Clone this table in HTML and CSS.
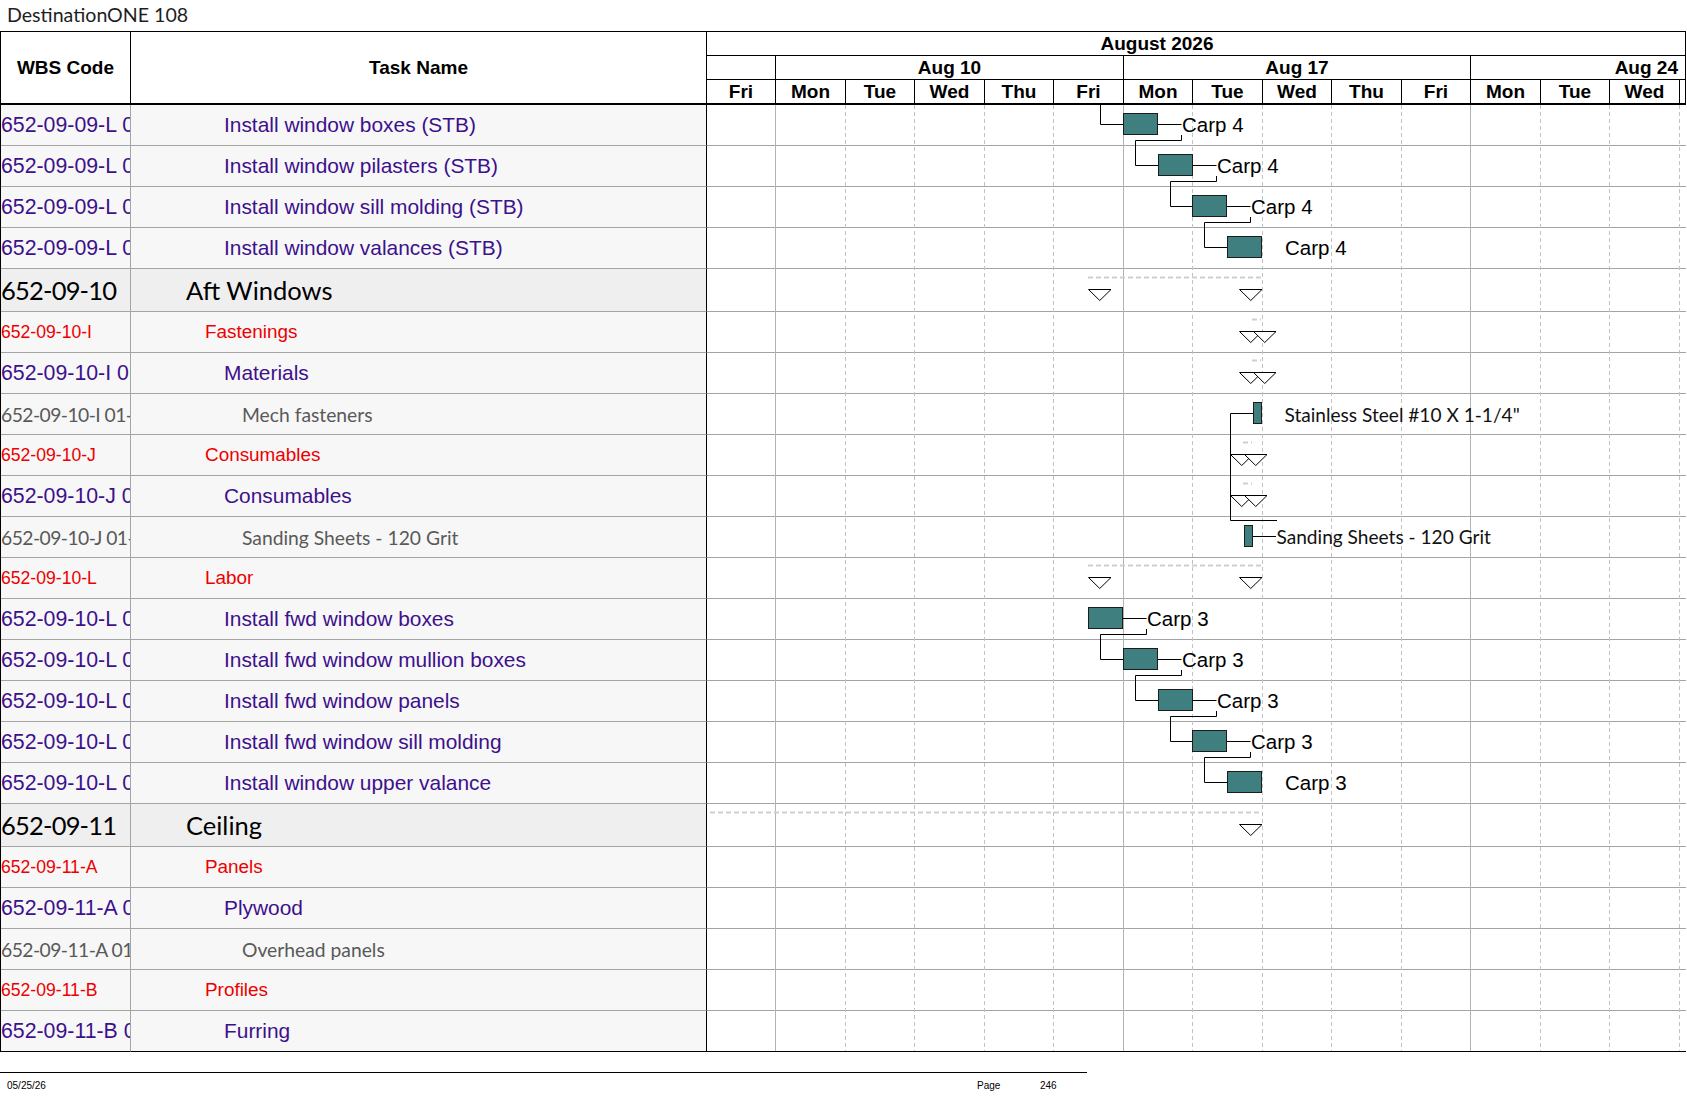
FILE: index.html
```html
<!DOCTYPE html>
<html lang="en">
<head>
<meta charset="utf-8">
<title>DestinationONE 108</title>
<link rel="stylesheet" href="styles.css">
</head>
<body>
<div class="page">
  <div class="doc-title">DestinationONE 108</div>
  <div class="sheet">
    <div class="sheet-head">
      <div class="hcell wbs-h">WBS Code</div>
      <div class="hcell task-h">Task Name</div>
      <div class="time-h">
        <div class="trow month"><span>August 2026</span></div>
        <div class="trow weeks">
          <div class="tc w0"></div>
          <div class="tc w1">Aug 10</div>
          <div class="tc w2">Aug 17</div>
          <div class="tc w3">Aug 24</div>
        </div>
        <div class="trow days">
          <div class="tc c69">Fri</div>
          <div class="tc c70">Mon</div>
          <div class="tc c69">Tue</div>
          <div class="tc c70">Wed</div>
          <div class="tc c69">Thu</div>
          <div class="tc c70">Fri</div>
          <div class="tc c69">Mon</div>
          <div class="tc c70">Tue</div>
          <div class="tc c69">Wed</div>
          <div class="tc c70">Thu</div>
          <div class="tc c69">Fri</div>
          <div class="tc c70">Mon</div>
          <div class="tc c69">Tue</div>
          <div class="tc c70">Wed</div>
          <div class="tc dend"></div>
        </div>
      </div>
    </div>

    <div class="sheet-body">
      <div class="row item"><div class="wbs">652-09-09-L 01-01</div><div class="task">Install window boxes (STB)</div><div class="gcell"></div></div>
      <div class="row item"><div class="wbs">652-09-09-L 01-02</div><div class="task">Install window pilasters (STB)</div><div class="gcell"></div></div>
      <div class="row item"><div class="wbs">652-09-09-L 01-03</div><div class="task">Install window sill molding (STB)</div><div class="gcell"></div></div>
      <div class="row item"><div class="wbs">652-09-09-L 01-04</div><div class="task">Install window valances (STB)</div><div class="gcell"></div></div>
      <div class="row sum"><div class="wbs">652-09-10</div><div class="task">Aft Windows</div><div class="gcell"></div></div>
      <div class="row grp"><div class="wbs">652-09-10-I</div><div class="task">Fastenings</div><div class="gcell"></div></div>
      <div class="row item"><div class="wbs">652-09-10-I 01</div><div class="task">Materials</div><div class="gcell"></div></div>
      <div class="row res"><div class="wbs">652-09-10-I 01-01</div><div class="task">Mech fasteners</div><div class="gcell"></div></div>
      <div class="row grp"><div class="wbs">652-09-10-J</div><div class="task">Consumables</div><div class="gcell"></div></div>
      <div class="row item"><div class="wbs">652-09-10-J 01</div><div class="task">Consumables</div><div class="gcell"></div></div>
      <div class="row res"><div class="wbs">652-09-10-J 01-01</div><div class="task">Sanding Sheets - 120 Grit</div><div class="gcell"></div></div>
      <div class="row grp"><div class="wbs">652-09-10-L</div><div class="task">Labor</div><div class="gcell"></div></div>
      <div class="row item"><div class="wbs">652-09-10-L 01-01</div><div class="task">Install fwd window boxes</div><div class="gcell"></div></div>
      <div class="row item"><div class="wbs">652-09-10-L 01-02</div><div class="task">Install fwd window mullion boxes</div><div class="gcell"></div></div>
      <div class="row item"><div class="wbs">652-09-10-L 01-03</div><div class="task">Install fwd window panels</div><div class="gcell"></div></div>
      <div class="row item"><div class="wbs">652-09-10-L 01-04</div><div class="task">Install fwd window sill molding</div><div class="gcell"></div></div>
      <div class="row item"><div class="wbs">652-09-10-L 01-05</div><div class="task">Install window upper valance</div><div class="gcell"></div></div>
      <div class="row sum"><div class="wbs">652-09-11</div><div class="task">Ceiling</div><div class="gcell"></div></div>
      <div class="row grp"><div class="wbs">652-09-11-A</div><div class="task">Panels</div><div class="gcell"></div></div>
      <div class="row item"><div class="wbs">652-09-11-A 01</div><div class="task">Plywood</div><div class="gcell"></div></div>
      <div class="row res"><div class="wbs">652-09-11-A 01-01</div><div class="task">Overhead panels</div><div class="gcell"></div></div>
      <div class="row grp"><div class="wbs">652-09-11-B</div><div class="task">Profiles</div><div class="gcell"></div></div>
      <div class="row item last"><div class="wbs">652-09-11-B 01</div><div class="task">Furring</div><div class="gcell"></div></div>

      <svg class="gantt-art" width="978" height="947" viewBox="0 0 978 947" xmlns="http://www.w3.org/2000/svg">
        <g class="grid-solid">
          <line x1="68.5" y1="0" x2="68.5" y2="946"/>
          <line x1="416.5" y1="0" x2="416.5" y2="946"/>
          <line x1="763.5" y1="0" x2="763.5" y2="946"/>
        </g>
        <g class="grid-dash">
          <line x1="138.5" y1="0" x2="138.5" y2="946"/>
          <line x1="207.5" y1="0" x2="207.5" y2="946"/>
          <line x1="277.5" y1="0" x2="277.5" y2="946"/>
          <line x1="346.5" y1="0" x2="346.5" y2="946"/>
          <line x1="485.5" y1="0" x2="485.5" y2="946"/>
          <line x1="555.5" y1="0" x2="555.5" y2="946"/>
          <line x1="624.5" y1="0" x2="624.5" y2="946"/>
          <line x1="694.5" y1="0" x2="694.5" y2="946"/>
          <line x1="833.5" y1="0" x2="833.5" y2="946"/>
          <line x1="902.5" y1="0" x2="902.5" y2="946"/>
          <line x1="972.5" y1="0" x2="972.5" y2="946"/>
        </g>

        <g class="sum-dash">
          <path d="M381 172.5 H555"/>
          <path d="M545 214.5 H554"/>
          <path d="M545 255.5 H554"/>
          <path d="M536 337.5 H545"/>
          <path d="M536 378.5 H545"/>
          <path d="M381 460.5 H555"/>
          <path d="M3 707.5 H555"/>
        </g>

        <g class="link">
          <path d="M393.5 0 V19.5 H416"/>
          <path d="M451 19.5 H474.5"/>
          <path d="M474.5 30 V35.5 H428.5 V60.5 H451"/>
          <path d="M486 60.5 H509.5"/>
          <path d="M509.5 71 V76.5 H463.5 V101.5 H485"/>
          <path d="M520 101.5 H543.5"/>
          <path d="M543.5 112 V117.5 H497.5 V142.5 H520"/>

          <path d="M546 308.5 H523.5 V415.5 H570"/>
          <path d="M546 431.5 H569"/>

          <path d="M416 513.5 H439.5"/>
          <path d="M439.5 524 V529.5 H393.5 V554.5 H416"/>
          <path d="M451 554.5 H474.5"/>
          <path d="M474.5 565 V570.5 H428.5 V595.5 H451"/>
          <path d="M486 595.5 H509.5"/>
          <path d="M509.5 606 V611.5 H463.5 V636.5 H485"/>
          <path d="M520 636.5 H543.5"/>
          <path d="M543.5 647 V652.5 H497.5 V677.5 H520"/>
        </g>

        <g class="mark">
          <path d="M381.5 184.5 H404 L392.75 195.5 Z"/>
          <path d="M532.5 184.5 H555 L543.75 195.5 Z"/>
          <path d="M532.5 226.5 H555 L543.75 237.5 Z"/>
          <path d="M546.5 226.5 H569 L557.75 237.5 Z"/>
          <path d="M532.5 267.5 H555 L543.75 278.5 Z"/>
          <path d="M546.5 267.5 H569 L557.75 278.5 Z"/>
          <path d="M523.5 349.5 H546 L534.75 360.5 Z"/>
          <path d="M537.5 349.5 H560 L548.75 360.5 Z"/>
          <path d="M523.5 390.5 H546 L534.75 401.5 Z"/>
          <path d="M537.5 390.5 H560 L548.75 401.5 Z"/>
          <path d="M381.5 472.5 H404 L392.75 483.5 Z"/>
          <path d="M532.5 472.5 H555 L543.75 483.5 Z"/>
          <path d="M532.5 719.5 H555 L543.75 730.5 Z"/>
        </g>

        <g class="bar">
          <rect x="416.5" y="8.5" width="34" height="21"/>
          <rect x="451.5" y="49.5" width="34" height="21"/>
          <rect x="485.5" y="90.5" width="34" height="21"/>
          <rect x="520.5" y="131.5" width="34" height="21"/>
          <rect x="546.5" y="297.5" width="8" height="21"/>
          <rect x="537.5" y="420.5" width="8" height="21"/>
          <rect x="381.5" y="502.5" width="34" height="21"/>
          <rect x="416.5" y="543.5" width="34" height="21"/>
          <rect x="451.5" y="584.5" width="34" height="21"/>
          <rect x="485.5" y="625.5" width="34" height="21"/>
          <rect x="520.5" y="666.5" width="34" height="21"/>
        </g>

        <g class="lbl">
          <text x="475" y="27">Carp 4</text>
          <text x="510" y="68">Carp 4</text>
          <text x="544" y="109">Carp 4</text>
          <text x="578" y="150">Carp 4</text>
          <text x="440" y="521">Carp 3</text>
          <text x="475" y="562">Carp 3</text>
          <text x="510" y="603">Carp 3</text>
          <text x="544" y="644">Carp 3</text>
          <text x="578" y="685">Carp 3</text>
        </g>
        <g class="lbl-res">
          <text x="577.5" y="316.5">Stainless Steel #10 X 1-1/4"</text>
          <text x="569.5" y="439">Sanding Sheets - 120 Grit</text>
        </g>
      </svg>
    </div>
  </div>

  <div class="footer">
    <span class="f-date">05/25/26</span>
    <span class="f-page">Page</span>
    <span class="f-num">246</span>
  </div>
</div>
</body>
</html>
```

FILE: styles.css
```css
* { box-sizing: border-box; }

html, body {
  margin: 0;
  padding: 0;
  background: #ffffff;
}

.page {
  width: 1687px;
  height: 1097px;
  overflow: hidden;
}

.doc-title {
  height: 31px;
  padding-left: 7px;
  font-family: Lato, "Noto Sans", sans-serif;
  font-size: 19.6px;
  line-height: 29px;
  color: #1e1e1e;
  white-space: nowrap;
}

.sheet {
  width: 1686px;
  border-top: 1px solid #000;
  border-left: 1px solid #000;
}

/* ---------- header ---------- */
.sheet-head {
  display: flex;
  height: 73px;
  border-bottom: 2px solid #000;
  font-family: "Liberation Sans", Arial, sans-serif;
  font-weight: bold;
  font-size: 19px;
  color: #000;
  background: #fff;
}

.hcell {
  display: flex;
  align-items: center;
  justify-content: center;
  height: 100%;
}

.wbs-h {
  width: 130px;
  border-right: 1px solid #000;
}

.task-h {
  width: 576px;
  border-right: 1px solid #000;
}

.time-h {
  width: 979px;
  border-right: 1px solid #000;
  display: flex;
  flex-direction: column;
}

.trow {
  display: flex;
  height: 24px;
  border-bottom: 1px solid #000;
}

.trow.days {
  height: 23px;
  border-bottom: 0;
}

.month {
  align-items: center;
  justify-content: center;
  padding-right: 78px;
}

.tc {
  display: flex;
  align-items: center;
  justify-content: center;
  height: 100%;
  border-right: 1px solid #000;
  white-space: nowrap;
  overflow: hidden;
}

.w0 { width: 69px; }
.w1 { width: 348px; }
.w2 { width: 347px; }
.w3 {
  width: 214px;
  border-right: 0;
  justify-content: flex-end;
  padding-right: 7px;
}

.c69 { width: 69px; }
.c70 { width: 70px; }
.dend { width: 5px; border-right: 0; }

/* ---------- body rows ---------- */
.sheet-body {
  position: relative;
}

.row {
  display: flex;
  height: 41px;
}

.row.sum { height: 43px; }

.row > div {
  height: 100%;
  border-bottom: 1px solid #a4a4a4;
}

.row.last > div { border-bottom-color: #000; }

.wbs {
  width: 130px;
  border-right: 1px solid #a4a4a4;
  background: #f7f7f7;
  display: flex;
  align-items: center;
  white-space: nowrap;
  overflow: hidden;
}

.task {
  width: 576px;
  border-right: 1px solid #000;
  background: #f7f7f7;
  display: flex;
  align-items: center;
  white-space: nowrap;
  overflow: hidden;
}

.gcell {
  width: 979px;
  background: #fff;
}

.row.sum .wbs,
.row.sum .task { background: #efefef; }

.item .wbs,
.item .task {
  font-family: "Liberation Sans", Arial, sans-serif;
  color: #3d108c;
}
.item .wbs { font-size: 21.3px; }
.item .task { font-size: 20.9px; padding-left: 93px; }

.grp .wbs,
.grp .task {
  font-family: "Liberation Sans", Arial, sans-serif;
  color: #ec0000;
}
.grp .wbs { font-size: 17.6px; }
.grp .task { font-size: 18.9px; padding-left: 74px; }

.res .wbs,
.res .task {
  font-family: Lato, "Noto Sans", sans-serif;
  font-size: 19.3px;
  color: #595959;
}
.res .wbs { letter-spacing: -0.55px; }
.res .task { padding-left: 111px; }

.sum .wbs,
.sum .task {
  font-family: Lato, "Noto Sans", sans-serif;
  font-size: 25.5px;
  color: #000;
}
.sum .wbs { letter-spacing: -0.8px; }
.sum .task { padding-left: 55px; }

/* ---------- gantt drawing ---------- */
.gantt-art {
  position: absolute;
  left: 706px;
  top: 0;
  overflow: visible;
}

.grid-solid line {
  stroke: #b3b3b3;
  stroke-width: 1;
}

.grid-dash line {
  stroke: #c2c2c2;
  stroke-width: 1;
  stroke-dasharray: 4 3;
}

.sum-dash path {
  fill: none;
  stroke: #cfcfcf;
  stroke-width: 2;
  stroke-dasharray: 5 3;
}

.link path {
  fill: none;
  stroke: #000;
  stroke-width: 1;
}

.mark path {
  fill: #fff;
  stroke: #000;
  stroke-width: 1;
}

.bar rect {
  fill: #407f7f;
  stroke: #1c1c1c;
  stroke-width: 1;
}

.lbl text {
  font-family: "Liberation Sans", Arial, sans-serif;
  font-size: 20.5px;
  fill: #000;
}

.lbl-res text {
  font-family: Lato, "Noto Sans", sans-serif;
  font-size: 19.1px;
  fill: #111;
}

/* ---------- footer ---------- */
.footer {
  margin-top: 20px;
  width: 1087px;
  border-top: 1px solid #000;
  display: flex;
  padding-top: 7px;
  font-family: "Liberation Sans", Arial, sans-serif;
  font-size: 10px;
  line-height: 12px;
  color: #000;
}

.f-date {
  width: 977px;
  padding-left: 7px;
}

.f-page { width: 63px; }
```
